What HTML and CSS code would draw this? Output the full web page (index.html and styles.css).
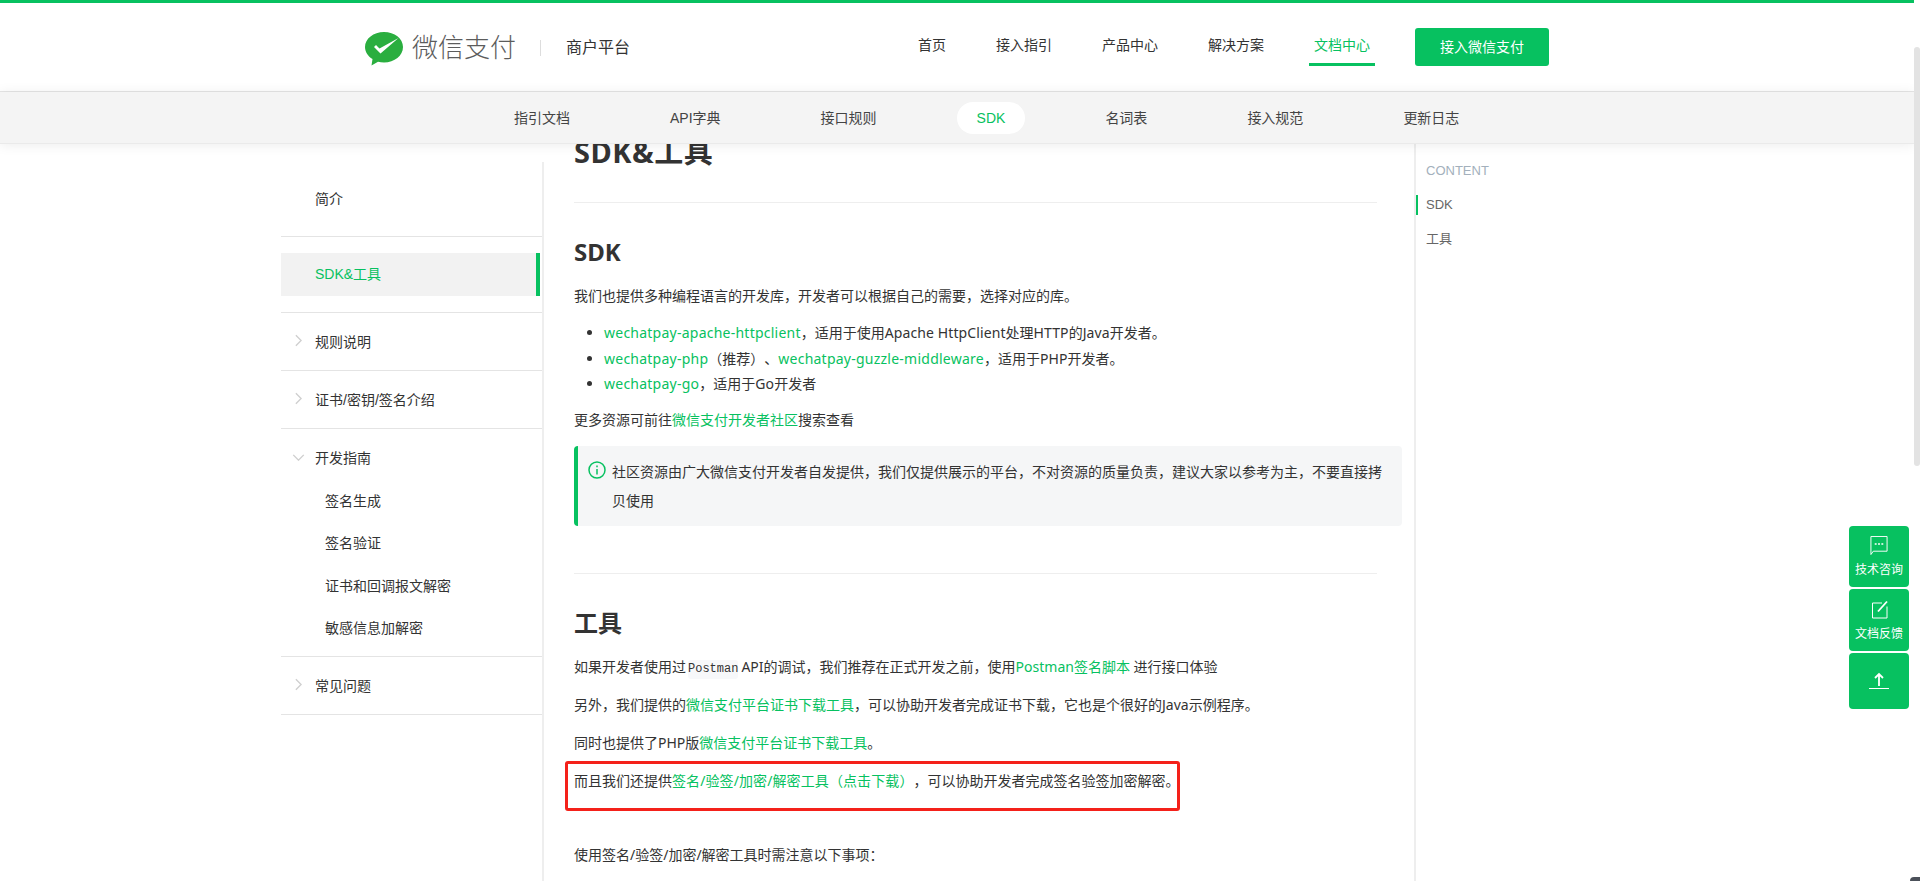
FILE: index.html
```html
<!DOCTYPE html>
<html lang="zh-CN">
<head>
<meta charset="utf-8">
<title>SDK&amp;工具</title>
<link rel="stylesheet" href="styles.css">
</head>
<body>
<div class="viewport">
  <div class="page">
    <header class="topbar">
      <div class="brand">
        <svg class="logo-mark" viewBox="0 0 38 34" aria-hidden="true">
          <path class="logo-green" d="M19 0C8.500 0 0 6.700 0 15c0 4.900 2.900 9.200 7.500 12L6.500 33.500l6.500-3.700c1.900.5 3.900.7 6 .7 10.500 0 19-6.900 19-15.500S29.500 0 19 0z"/>
          <path class="logo-white" d="M9 15l2-2 3.500 3.500L33.500 6l-18 15.500z"/>
        </svg>
        <span class="logo-text">微信支付</span>
        <span class="brand-divider"></span>
        <span class="brand-sub">商户平台</span>
      </div>
      <nav class="mainnav">
        <a class="mainnav-item">首页</a>
        <a class="mainnav-item">接入指引</a>
        <a class="mainnav-item">产品中心</a>
        <a class="mainnav-item">解决方案</a>
        <a class="mainnav-item is-active">文档中心</a>
        <a class="cta">接入微信支付</a>
      </nav>
    </header>
    <nav class="subnav">
      <a class="subnav-item">指引文档</a>
      <a class="subnav-item">API字典</a>
      <a class="subnav-item">接口规则</a>
      <a class="subnav-item is-active">SDK</a>
      <a class="subnav-item">名词表</a>
      <a class="subnav-item">接入规范</a>
      <a class="subnav-item">更新日志</a>
    </nav>
    <main class="layout">
      <aside class="sidebar">
        <div class="side-group side-first"><a class="side-link">简介</a></div>
        <div class="side-group side-sdk"><a class="side-link is-active">SDK&amp;工具</a></div>
        <div class="side-group side-row">
          <svg class="chev" viewBox="0 0 8 14" aria-hidden="true"><path d="M1 1l6 6-6 6"/></svg>
          <a class="side-link">规则说明</a>
        </div>
        <div class="side-group side-row">
          <svg class="chev" viewBox="0 0 8 14" aria-hidden="true"><path d="M1 1l6 6-6 6"/></svg>
          <a class="side-link">证书/密钥/签名介绍</a>
        </div>
        <div class="side-group side-open">
          <div class="side-head">
            <svg class="chev-down" viewBox="0 0 14 8" aria-hidden="true"><path d="M1 1l6 6 6-6"/></svg>
            <a class="side-link">开发指南</a>
          </div>
          <a class="side-sub">签名生成</a>
          <a class="side-sub">签名验证</a>
          <a class="side-sub">证书和回调报文解密</a>
          <a class="side-sub">敏感信息加解密</a>
        </div>
        <div class="side-group side-row">
          <svg class="chev" viewBox="0 0 8 14" aria-hidden="true"><path d="M1 1l6 6-6 6"/></svg>
          <a class="side-link">常见问题</a>
        </div>
      </aside>
      <article class="doc">
        <h1 class="doc-title">SDK&amp;工具</h1>
        <hr class="rule rule-first">
        <h2 class="doc-h2 h2-sdk">SDK</h2>
        <p class="para para-lead">我们也提供多种编程语言的开发库，开发者可以根据自己的需要，选择对应的库。</p>
        <ul class="links">
          <li><a class="lnk lnk-wide">wechatpay-apache-httpclient</a>，适用于使用<span class="lat">Apache HttpClient</span>处理<span class="lat">HTTP</span>的<span class="lat">Java</span>开发者。</li>
          <li><a class="lnk lnk-wide">wechatpay-php</a>（推荐）、<a class="lnk lnk-wide">wechatpay-guzzle-middleware</a>，适用于<span class="lat">PHP</span>开发者。</li>
          <li><a class="lnk lnk-wide">wechatpay-go</a>，适用于<span class="lat">Go</span>开发者</li>
        </ul>
        <p class="para para-more">更多资源可前往<a class="lnk">微信支付开发者社区</a>搜索查看</p>
        <div class="notice">
          <svg class="notice-icon" viewBox="0 0 18 18" aria-hidden="true">
            <circle cx="9" cy="9" r="8"/>
            <path d="M9 8v5.500M9 4.500v1.800"/>
          </svg>
          <p class="notice-text">社区资源由广大微信支付开发者自发提供，我们仅提供展示的平台，不对资源的质量负责，建议大家以参考为主，不要直接拷贝使用</p>
        </div>
        <hr class="rule rule-second">
        <h2 class="doc-h2 h2-tools">工具</h2>
        <p class="para para-tool">如果开发者使用过<code class="code">Postman</code>API的调试，我们推荐在正式开发之前，使用<a class="lnk">Postman签名脚本</a> 进行接口体验</p>
        <p class="para para-tool">另外，我们提供的<a class="lnk">微信支付平台证书下载工具</a>，可以协助开发者完成证书下载，它也是个很好的Java示例程序。</p>
        <p class="para para-tool">同时也提供了PHP版<a class="lnk">微信支付平台证书下载工具</a>。</p>
        <p class="para para-tool para-marked">而且我们还提供<a class="lnk lnk-slash">签名/验签/加密/解密工具（点击下载）</a>，可以协助开发者完成签名验签加密解密。<span class="redbox"></span></p>
        <p class="para para-last">使用签名/验签/加密/解密工具时需注意以下事项：</p>
      </article>
      <aside class="toc">
        <div class="toc-title">CONTENT</div>
        <a class="toc-item is-active">SDK</a>
        <a class="toc-item">工具</a>
      </aside>
    </main>
  </div>
  <div class="scrollbar"><div class="scroll-thumb"></div></div>
  <div class="float-tools">
    <a class="tool tool-chat">
      <svg class="tool-icon" viewBox="0 0 18 20" aria-hidden="true">
        <path class="tool-stroke" d="M.5 19.500V.5h17v15.500H3z"/>
        <path class="tool-dots" d="M4.500 8.500h2M8 8.500h2M11.500 8.500h2"/>
      </svg>
      <span>技术咨询</span>
    </a>
    <a class="tool tool-edit">
      <svg class="tool-icon" viewBox="0 0 18 18" aria-hidden="true">
        <path class="tool-stroke" d="M12 2.500H2.500v15h14.500V6"/>
        <path class="tool-pen" d="M8 11L17 1"/>
      </svg>
      <span>文档反馈</span>
    </a>
    <a class="tool tool-top">
      <svg class="tool-icon-top" viewBox="0 0 20 18" aria-hidden="true">
        <path class="tool-pen" d="M10 14V2M6 6l4-4 4 4"/>
        <path class="tool-stroke" d="M0 16.500h20"/>
      </svg>
    </a>
  </div>
  <div class="corner-peek"></div>
</div>
</body>
</html>
```
FILE: styles.css
```css
* { box-sizing: border-box; }
html, body { margin: 0; height: 100%; overflow: hidden; }
body {
  font-family: "Liberation Sans", "Noto Sans CJK SC", sans-serif;
  font-size: 14px;
  color: #333;
  background: #fff;
  text-spacing-trim: space-all;
}
a { color: inherit; text-decoration: none; }
.viewport { position: relative; height: 881px; overflow: hidden; }
.page { width: 1914px; height: 881px; overflow: hidden; }

/* header */
.topbar {
  height: 92px;
  border-top: 3px solid #07c160;
  border-bottom: 1px solid #e5e5e5;
  display: flex;
  align-items: center;
  justify-content: space-between;
  padding: 0 365px;
}
.brand { display: flex; align-items: center; }
.logo-mark { width: 38px; height: 34px; margin-top: 4px; }
.logo-green { fill: #2aae3f; }
.logo-white { fill: #fff; }
.logo-text { margin-left: 9px; font-size: 26px; line-height: 36px; color: #5c5c5c; font-weight: 300; margin-top: 2px; }
.brand-divider { width: 1px; height: 16px; background: #ddd; margin: 2px 25px 0 24px; }
.brand-sub { font-size: 16px; line-height: 24px; color: #333; margin-top: 2px; }
.mainnav { display: flex; align-items: center; gap: 40px; }
.mainnav-item {
  padding: 0 5px;
  height: 38px;
  line-height: 34px;
  color: #333;
  border-bottom: 3px solid transparent;
}
.mainnav-item.is-active { color: #07c160; border-bottom-color: #07c160; }
.cta {
  width: 134px;
  height: 38px;
  line-height: 38px;
  text-align: center;
  color: #fff;
  background: #07c160;
  border-radius: 3px;
}

/* sub navigation */
.subnav {
  height: 52px;
  position: relative;
  z-index: 2;
  display: flex;
  align-items: center;
  gap: 60px;
  padding: 0 0 0 494px;
  background: #f4f4f4;
  box-shadow: 0 1px 12px rgba(0, 0, 0, .08);
  border-bottom: 1px solid #eaeaea;
}
.subnav-item { height: 32px; line-height: 32px; padding: 0 20px; border-radius: 16px; color: #444; }
.subnav-item.is-active { background: #fff; color: #07c160; }

/* three columns */
.layout { display: flex; height: 737px; overflow: hidden; padding-left: 281px; }
.sidebar { width: 263px; flex: none; border-right: 2px solid #eee; margin-top: 18px; }
.side-group { border-bottom: 1px solid #e4e4e4; }
.side-first { height: 75px; padding: 25px 0 0 34px; line-height: 24px; }
.side-sdk { height: 76px; padding: 16px 2px 0 0; }
.side-link { color: #333; }
.side-link.is-active {
  display: block;
  height: 43px;
  line-height: 43px;
  padding-left: 34px;
  background: #f2f2f2;
  color: #07c160;
  border-right: 4px solid #07c160;
}
.side-row { height: 58px; display: flex; align-items: center; padding: 0 0 2px 14px; }
.chev { width: 7px; height: 13px; margin-right: 13px; }
.chev path, .chev-down path { fill: none; stroke: #cfcfcf; stroke-width: 1.600; }
.side-open { height: 228px; padding-top: 16px; }
.side-head { display: flex; align-items: center; height: 24px; padding-left: 11px; }
.chev-down { width: 13px; height: 7px; margin-right: 10px; }
.side-sub { display: block; height: 24px; line-height: 24px; margin: 0 0 18.300px 44px; color: #333; }
.side-sub:first-of-type { margin-top: 20px; }

.doc {
  width: 872px;
  flex: none;
  padding: 0 0 0 30px;
  margin-top: -12px;
  border-right: 2px solid #eee;
  font-family: "Noto Sans", "Noto Sans CJK SC", sans-serif;
}
.doc-title { margin: 0; font-size: 29px; line-height: 40px; font-weight: 700; letter-spacing: .5px; color: #333; }
.rule { border: 0; height: 1px; background: #eee; margin: 0; width: 803px; }
.rule-first { margin-top: 30px; }
.doc-h2 { margin: 0; font-size: 24px; line-height: 34px; font-weight: 700; color: #333; }
.h2-sdk { margin-top: 32px; }
.h2-tools { margin-top: 32px; }
.para { margin: 0; line-height: 26px; color: #333; }
.para-lead { margin-top: 14px; }
.links { margin: 11px 0 0; padding: 0 0 0 30px; line-height: 25.500px; }
.links li::marker { color: #333; }
.lnk { color: #07c160; }
.lnk-wide { letter-spacing: .24px; }
.lnk-slash { letter-spacing: .1px; }
.lat { letter-spacing: .1px; }
.para-more { margin-top: 10px; }
.notice {
  display: flex;
  width: 828px;
  height: 80px;
  margin-top: 13px;
  padding: 15px 10px 0 10px;
  background: #f5f6f7;
  border-left: 4px solid #07c160;
  border-radius: 4px;
}
.notice-icon { flex: none; width: 18px; height: 18px; margin: 0 6px 0 0; fill: none; stroke: #07c160; stroke-width: 1.500; }
.notice-text { margin: -4px 0 0; line-height: 29px; color: #333; }
.rule-second { margin-top: 47px; }
.para-tool { margin-top: 12px; }
.h2-tools + .para-tool { margin-top: 14px; }
.code {
  display: inline-block;
  font-family: "Liberation Mono", monospace;
  font-size: 12px;
  line-height: 19px;
  background: #f7f8fa;
  border-radius: 3px;
  margin: 0 3px 0 2px;
}
.para-marked { position: relative; }
.redbox {
  position: absolute;
  left: -9px;
  top: -7px;
  width: 615px;
  height: 50px;
  border: 3px solid #f4211a;
  border-radius: 3px;
}
.para-last { margin-top: 48px; }

.toc { flex: 1; padding-top: 15px; }
.toc-title { height: 24px; line-height: 24px; margin-bottom: 12px; padding-left: 10px; font-size: 13px; color: #a3b0bc; }
.toc-item { display: block; height: 20px; line-height: 20px; margin: 0 0 14px; padding-left: 8px; font-size: 13px; color: #666; border-left: 2px solid transparent; }
.toc-item.is-active { border-left-color: #07c160; }

/* page scrollbar */
.scrollbar { position: absolute; top: 0; right: 0; width: 6px; height: 881px; background: #fff; }
.scroll-thumb { height: 419px; margin-top: 47px; background: #e3e3e3; border-radius: 3px; }

/* floating tools */
.float-tools { position: absolute; left: 1849px; top: 526px; width: 60px; display: flex; flex-direction: column; gap: 2px; z-index: 3; }
.tool {
  display: flex;
  flex-direction: column;
  align-items: center;
  background: #07c160;
  color: #fff;
  border-radius: 4px;
  font-size: 12px;
  line-height: 16px;
}
.tool-chat { height: 61px; padding-top: 10px; }
.tool-edit { height: 62px; padding-top: 11px; }
.tool-top { height: 56px; justify-content: center; }
.tool-icon { width: 18px; height: 19px; margin-bottom: 7px; }
.tool-icon-top { width: 20px; height: 18px; }
.tool-stroke { fill: none; stroke: #fff; stroke-width: 1; }
.tool-pen { fill: none; stroke: #fff; stroke-width: 1.800; }
.tool-dots { fill: none; stroke: #fff; stroke-width: 1.500; }
.corner-peek { position: absolute; right: 0; bottom: 0; width: 10px; height: 4px; background: #4b5059; border-radius: 4px 0 0 0; }
```
